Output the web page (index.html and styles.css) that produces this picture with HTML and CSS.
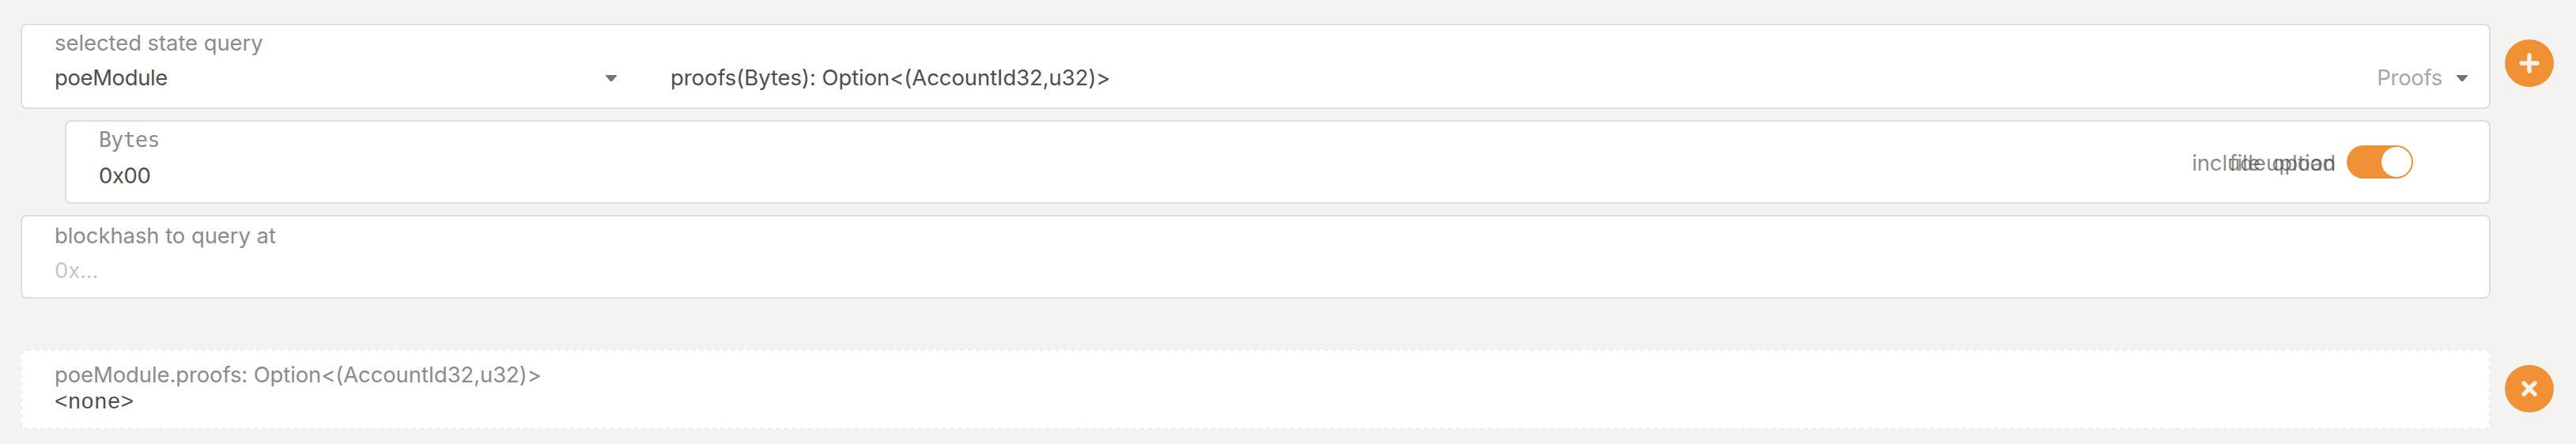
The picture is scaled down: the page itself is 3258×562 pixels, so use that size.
FILE: index.html
```html
<!DOCTYPE html>
<html lang="en">
<head>
<meta charset="utf-8">
<title>Chain state</title>
<link rel="stylesheet" href="styles.css">
</head>
<body>
<main class="page">
  <section class="row">
    <div class="fields">
      <div class="box query">
        <div class="label">selected state query</div>
        <div class="selects">
          <div class="select module"><span class="value name">poeModule</span><svg class="caret" viewBox="0 0 14 8"><path d="M0 0h14v1L8 8H6L0 1z"/></svg></div>
          <div class="select method"><span class="value">proofs(Bytes): Option&lt;(AccountId32,u32)&gt;</span><span class="hint">Proofs</span><svg class="caret" viewBox="0 0 14 8"><path d="M0 0h14v1L8 8H6L0 1z"/></svg></div>
        </div>
      </div>
      <div class="box param">
        <div>
          <div class="label mono">Bytes</div>
          <div class="value name">0x00</div>
        </div>
        <div class="toggles">
          <div class="captions"><span>include option</span><span>file upload</span></div>
          <div class="toggle"><div class="knob"></div></div>
        </div>
      </div>
      <div class="box hash">
        <div class="label">blockhash to query at</div>
        <div class="value placeholder">0x...</div>
      </div>
    </div>
    <button class="button"><svg class="icon" viewBox="0 0 26 26"><path d="M13 3v20M3 13h20"/></svg></button>
  </section>
  <section class="row result-row">
    <div class="box result">
      <div class="label">poeModule.proofs: Option&lt;(AccountId32,u32)&gt;</div>
      <div class="none">&lt;none&gt;</div>
    </div>
    <button class="button"><svg class="icon" viewBox="0 0 26 26"><path d="M6 6l14 14M20 6L6 20"/></svg></button>
  </section>
</main>
</body>
</html>
```
FILE: styles.css
```css
* { box-sizing: border-box; }
body { margin: 0; background: #f4f3f1; font-family: Inter, "Liberation Sans", sans-serif; font-size: 27.5px; letter-spacing: -.08px; line-height: 44px; color: #4e4e4e; }
.page { height: 562px; padding: 30px 28px 0 26px; overflow: hidden; }
.row { display: flex; align-items: flex-start; gap: 18px; }
.fields { flex: 1; display: flex; flex-direction: column; gap: 14px; }
.box { background: #fff; border: 2px solid #dededd; border-radius: 8px; padding: 1px 0 0 41px; white-space: nowrap; }
.query { height: 108px; padding-top: 0; }
.param { height: 106px; margin-left: 56px; display: flex; justify-content: space-between; padding-right: 96px; }
.hash { height: 106px; padding-top: 2px; }
.label { color: #8b8b8b; }
.name { letter-spacing: -.4px; }
.selects { display: flex; }
.select { display: flex; align-items: center; }
.module { width: 711px; justify-content: space-between; }
.method { flex: 1; margin-left: 68px; padding-right: 27px; }
.hint { margin-left: auto; margin-right: 18px; color: #a7a7a7; letter-spacing: -.3px; }
.caret { width: 14px; height: 8px; margin-top: 2px; fill: #727272; display: block; }
.mono { font-family: "DejaVu Sans Mono", monospace; font-size: 26.5px; letter-spacing: -.6px; }
.param .value { line-height: 47px; }
.placeholder { color: #c7c7c7; letter-spacing: -.2px; }
.toggles { display: flex; align-items: flex-start; gap: 14px; padding-top: 29px; }
.captions { display: grid; justify-items: end; color: rgba(78, 78, 78, .66); letter-spacing: -.15px; }
.captions span { grid-area: 1 / 1; }
.toggle { width: 84px; height: 42px; border-radius: 21px; background: #f19135; padding: 2px; display: flex; justify-content: flex-end; }
.knob { width: 38px; height: 38px; border-radius: 50%; background: #fff; }
.button { width: 62px; height: 60px; margin: 20px 0 0; padding: 0; border: 0; border-radius: 50%; background: #f19135; display: flex; align-items: center; justify-content: center; }
.icon { width: 26px; height: 26px; fill: none; stroke: #fdf0e4; stroke-width: 5.4; stroke-linecap: round; }
.result-row { margin-top: 64px; }
.result { flex: 1; height: 102px; border: 2px dashed #eeeeed; padding-top: 8px; }
.result .label { letter-spacing: -.12px; }
.none { font-family: "Courier New", "Liberation Mono", monospace; font-size: 27.8px; letter-spacing: 0; line-height: 28px; }
```
